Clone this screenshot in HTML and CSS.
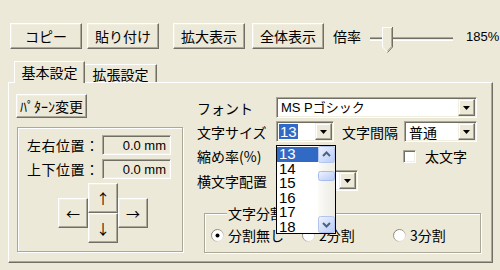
FILE: index.html
```html
<!DOCTYPE html>
<html lang="ja">
<head>
<meta charset="utf-8">
<link rel="stylesheet" href="styles.css">
</head>
<body>
<div class="toolbar">
  <button class="btn tb">コピー</button>
  <button class="btn tb g5">貼り付け</button>
  <button class="btn tb g14">拡大表示</button>
  <button class="btn tb g7">全体表示</button>
  <span class="rate">倍率</span>
  <svg class="slider" width="96" height="30" viewBox="0 0 96 30">
    <rect x="8" y="11" width="83" height="1" fill="#aca899"/>
    <rect x="8" y="12" width="83" height="1" fill="#716f64"/>
    <rect x="8" y="13" width="83" height="1" fill="#f1efe2"/>
    <rect x="8" y="14" width="83" height="1" fill="#ffffff"/>
    <path d="M20,1H31V21L25.5,27L20,21Z" fill="#ece9d8"/>
    <path d="M20.5,21V1.5H30.5" fill="none" stroke="#ffffff"/>
    <path d="M20.5,21L25.5,26.3" fill="none" stroke="#ffffff"/>
    <path d="M30.5,1V21L25.5,26.5" fill="none" stroke="#716f64"/>
    <path d="M29.5,2V20.6L25.6,24.8" fill="none" stroke="#aca899"/>
  </svg>
  <span class="pct">185%</span>
</div>

<div class="tabs">
  <div class="tab active">基本設定</div>
  <div class="tab">拡張設定</div>
</div>

<div class="panel">
  <div class="leftcol">
    <button class="btn pattern">ﾊﾟﾀｰﾝ変更</button>
    <div class="group pos">
      <div class="prow"><span class="plbl">左右位置：</span><span class="edit">0.0 mm</span></div>
      <div class="prow"><span class="plbl">上下位置：</span><span class="edit">0.0 mm</span></div>
      <div class="arrows">
        <button class="btn arr up">↑</button>
        <button class="btn arr lt">←</button>
        <button class="btn arr rt">→</button>
        <button class="btn arr dn">↓</button>
      </div>
    </div>
  </div>

  <div class="rightcol">
    <div class="r">
      <span class="lbl">フォント</span>
      <div class="combo w201"><span class="val font">MS Pゴシック</span><span class="dd"><svg width="7" height="4" viewBox="0 0 7 4"><path d="M0 0H7L3.5 4Z" fill="#000"/></svg></span></div>
    </div>
    <div class="r">
      <span class="lbl">文字サイズ</span>
      <div class="combo w58"><span class="val num"><span class="sel">13</span></span><span class="dd"><svg width="7" height="4" viewBox="0 0 7 4"><path d="M0 0H7L3.5 4Z" fill="#000"/></svg></span></div>
      <span class="lbl2">文字間隔</span>
      <div class="combo w73"><span class="val">普通</span><span class="dd"><svg width="7" height="4" viewBox="0 0 7 4"><path d="M0 0H7L3.5 4Z" fill="#000"/></svg></span></div>
    </div>
    <div class="r r3">
      <span class="lbl wide">縮め率(%)</span>
      <span class="chk"></span>
      <span class="chklbl">太文字</span>
    </div>
    <div class="r">
      <span class="lbl">横文字配置</span>
      <div class="combo w82"><span class="val"></span><span class="dd"><svg width="7" height="4" viewBox="0 0 7 4"><path d="M0 0H7L3.5 4Z" fill="#000"/></svg></span></div>
    </div>
    <div class="group split">
      <span class="gtitle">文字分割</span>
      <div class="opts">
        <label class="opt o1">
          <svg width="13" height="13" viewBox="0 0 13 13"><defs><linearGradient id="rg1" x1="0" y1="0" x2="1" y2="1"><stop offset="0" stop-color="#716f64"/><stop offset="0.5" stop-color="#aca899"/><stop offset="1" stop-color="#ffffff"/></linearGradient></defs><circle cx="6.5" cy="6.5" r="6" fill="#ffffff" stroke="url(#rg1)"/><circle cx="6.5" cy="6.5" r="2" fill="#000"/></svg>
          <span class="otxt">分割無し</span>
        </label>
        <label class="opt o2">
          <svg width="13" height="13" viewBox="0 0 13 13"><defs><linearGradient id="rg2" x1="0" y1="0" x2="1" y2="1"><stop offset="0" stop-color="#716f64"/><stop offset="0.5" stop-color="#aca899"/><stop offset="1" stop-color="#ffffff"/></linearGradient></defs><circle cx="6.5" cy="6.5" r="6" fill="#ffffff" stroke="url(#rg2)"/></svg>
          <span class="otxt">2分割</span>
        </label>
        <label class="opt o3">
          <svg width="13" height="13" viewBox="0 0 13 13"><defs><linearGradient id="rg3" x1="0" y1="0" x2="1" y2="1"><stop offset="0" stop-color="#716f64"/><stop offset="0.5" stop-color="#aca899"/><stop offset="1" stop-color="#ffffff"/></linearGradient></defs><circle cx="6.5" cy="6.5" r="6" fill="#ffffff" stroke="url(#rg3)"/></svg>
          <span class="otxt">3分割</span>
        </label>
      </div>
    </div>
  </div>
</div>

<div class="droplist">
  <ul class="items">
    <li class="hl">13</li>
    <li>14</li>
    <li>15</li>
    <li>16</li>
    <li>17</li>
    <li>18</li>
  </ul>
  <div class="sbar">
    <svg class="sbtn" width="17" height="17" viewBox="0 0 17 17"><defs><linearGradient id="sg1" x1="0" y1="0" x2="1" y2="1"><stop offset="0" stop-color="#eef3fe"/><stop offset="1" stop-color="#b7cbf7"/></linearGradient></defs><rect x="0.5" y="0.5" width="16" height="16" rx="2" fill="url(#sg1)" stroke="#b3c5ee"/><path d="M5 10L8.5 6.5L12 10" fill="none" stroke="#4d6185" stroke-width="2"/></svg>
    <svg class="sthumb" width="17" height="10" viewBox="0 0 17 10"><defs><linearGradient id="sg2" x1="0" y1="0" x2="1" y2="1"><stop offset="0" stop-color="#eef3fe"/><stop offset="1" stop-color="#b7cbf7"/></linearGradient></defs><rect x="0.5" y="0.5" width="16" height="9" rx="2" fill="url(#sg2)" stroke="#a8bdee"/></svg>
    <span class="sspace"></span>
    <svg class="sbtn" width="17" height="17" viewBox="0 0 17 17"><defs><linearGradient id="sg3" x1="0" y1="0" x2="1" y2="1"><stop offset="0" stop-color="#eef3fe"/><stop offset="1" stop-color="#b7cbf7"/></linearGradient></defs><rect x="0.5" y="0.5" width="16" height="16" rx="2" fill="url(#sg3)" stroke="#b3c5ee"/><path d="M5 7L8.5 10.5L12 7" fill="none" stroke="#4d6185" stroke-width="2"/></svg>
  </div>
</div>
</body>
</html>
```

FILE: styles.css
```css
* { box-sizing: border-box; }
html, body { margin: 0; padding: 0; }
body {
  width: 500px;
  height: 270px;
  overflow: hidden;
  position: relative;
  background: #ece9d8;
  color: #000;
  font-family: "Noto Sans CJK JP", sans-serif;
  font-size: 14px;
}

.btn {
  background: #ece9d8;
  border: 1px solid;
  border-color: #ffffff #716f64 #716f64 #ffffff;
  box-shadow: inset -1px -1px 0 #aca899, inset 1px 1px 0 #f1efe2;
  font-family: "Noto Sans CJK JP", sans-serif;
  font-size: 14px;
  line-height: 1;
  color: #000;
  padding: 0;
  margin: 0;
  display: flex;
  align-items: center;
  justify-content: center;
}

/* toolbar */
.toolbar {
  display: flex;
  align-items: center;
  height: 49px;
  padding: 23px 0 0 10px;
}
.tb { width: 72px; height: 26px; flex: none; }
.g5 { margin-left: 5px; }
.g14 { margin-left: 14px; }
.g7 { margin-left: 7px; }
.rate { margin-left: 9px; line-height: 1; }
.slider { flex: none; align-self: flex-start; margin-top: 3px; margin-left: 1px; }
.pct {
  margin-left: 8px;
  font-family: "Liberation Sans", sans-serif;
  font-size: 13px;
  line-height: 1;
}

/* tabs */
.tabs {
  display: flex;
  align-items: flex-end;
  height: 21px;
  margin-top: 12px;
  padding-left: 14px;
  position: relative;
  z-index: 2;
}
.tab {
  height: 18px;
  width: 72px;
  background: #ece9d8;
  border-top: 1px solid #ffffff;
  border-right: 1px solid #716f64;
  box-shadow: inset -1px 0 0 #aca899;
  display: flex;
  align-items: center;
  justify-content: center;
  line-height: 1;
}
.tab.active {
  width: 71px;
  height: 22px;
  margin-bottom: -1px;
  border-left: 1px solid #ffffff;
  padding-bottom: 2px;
}

/* panel */
.panel {
  margin-left: 8px;
  width: 485px;
  height: 181px;
  border: 1px solid;
  border-color: #ffffff #716f64 #716f64 #ffffff;
  box-shadow: inset -1px -1px 0 #aca899;
  display: flex;
  position: relative;
  z-index: 1;
}
.leftcol {
  flex: none;
  width: 174px;
  padding: 11px 0 0 7px;
}
.pattern { width: 71px; height: 24px; font-size: 14px; }

.group {
  border: 1px solid #aca899;
  box-shadow: inset 1px 1px 0 #ffffff, 1px 1px 0 #ffffff;
}
.pos {
  margin: 9px 0 0 1px;
  width: 166px;
  height: 125px;
  padding: 7px 0 0 9px;
}
.prow {
  display: flex;
  align-items: center;
  height: 20px;
  margin-bottom: 4px;
}
.plbl { width: 75px; flex: none; letter-spacing: 0.5px; line-height: 1; }
.edit {
  width: 69px;
  height: 20px;
  border: 1px solid;
  border-color: #aca899 #ffffff #ffffff #aca899;
  box-shadow: inset 1px 1px 0 #716f64, inset -1px -1px 0 #f1efe2;
  font-family: "Liberation Sans", sans-serif;
  font-size: 13px;
  display: flex;
  align-items: center;
  justify-content: flex-end;
  padding-right: 4px;
}
.arrows {
  display: grid;
  grid-template-columns: repeat(3, 30px);
  grid-template-rows: repeat(4, 15px);
  margin: 2px 0 0 31px;
}
.arr { width: 30px; height: 30px; font-size: 14px; }
.up { grid-column: 2; grid-row: 1 / 3; }
.lt { grid-column: 1; grid-row: 2 / 4; }
.rt { grid-column: 3; grid-row: 2 / 4; }
.dn { grid-column: 2; grid-row: 3 / 5; }

.rightcol {
  flex: none;
  width: 290px;
  margin-left: 14px;
  padding-top: 14px;
}
.r {
  display: flex;
  align-items: center;
  height: 21px;
  margin-bottom: 3px;
}
.r3 { height: 22px; }
.lbl { width: 79px; flex: none; line-height: 1; }
.lbl.wide { width: 206px; }
.lbl2 { margin-left: 8px; width: 62px; flex: none; line-height: 1; }
.combo {
  height: 21px;
  flex: none;
  display: flex;
  align-items: stretch;
  background: #ffffff;
  border: 1px solid;
  border-color: #aca899 #ffffff #ffffff #aca899;
  box-shadow: inset 1px 1px 0 #716f64, inset -1px -1px 0 #f1efe2;
  padding: 1px;
}
.w201 { width: 201px; }
.w58 { width: 58px; }
.w73 { width: 73px; }
.w82 { width: 82px; }
.val {
  flex: 1;
  display: flex;
  align-items: center;
  padding-left: 3px;
  line-height: 1;
  white-space: nowrap;
  overflow: hidden;
}
.val.font { font-size: 13px; font-family: "Liberation Sans", "Noto Sans CJK JP", sans-serif; padding-left: 3px; }
.val.num { padding-left: 1px; }
.sel {
  background: #316ac5;
  color: #ffffff;
  font-family: "Liberation Sans", sans-serif;
  font-size: 15px;
  line-height: 15px;
  padding: 0 1px;
}
.dd {
  width: 17px;
  flex: none;
  background: #ece9d8;
  border: 1px solid;
  border-color: #f1efe2 #716f64 #716f64 #f1efe2;
  box-shadow: inset -1px -1px 0 #aca899, inset 1px 1px 0 #ffffff;
  display: flex;
  align-items: center;
  justify-content: center;
}
.chk {
  width: 13px;
  height: 13px;
  flex: none;
  background: #ffffff;
  border: 1px solid;
  border-color: #aca899 #ffffff #ffffff #aca899;
  box-shadow: inset 1px 1px 0 #716f64, inset -1px -1px 0 #f1efe2;
}
.chklbl { margin-left: 9px; line-height: 1; }

.split {
  margin: 22px 0 0 7px;
  width: 277px;
  height: 40px;
  position: relative;
}
.gtitle {
  position: absolute;
  top: -9px;
  left: 22px;
  line-height: 16px;
  padding: 0 1px;
  background: #ece9d8;
}
.opts {
  display: flex;
  align-items: center;
  height: 16px;
  margin-top: 13px;
  padding-left: 6px;
}
.opt { display: flex; align-items: center; flex: none; }
.opt svg { flex: none; }
.o1, .o2 { width: 91px; }
.otxt { margin-left: 4px; line-height: 1; }

/* dropdown list overlay */
.droplist {
  position: absolute;
  left: 276px;
  top: 145px;
  width: 60px;
  height: 89px;
  background: #ffffff;
  border: 1px solid #000;
  z-index: 10;
  display: flex;
}
.items {
  list-style: none;
  margin: 0;
  padding: 1px 0 0 0;
  width: 41px;
  flex: none;
}
.items li {
  height: 14.5px;
  line-height: 14.5px;
  font-family: "Liberation Sans", sans-serif;
  font-size: 15px;
  padding-left: 2px;
}
.items li.hl { background: #316ac5; color: #ffffff; }
.sbar {
  width: 17px;
  flex: none;
  display: flex;
  flex-direction: column;
  background: linear-gradient(90deg, #fbfbf8, #ecebe3);
}
.sbtn { flex: none; display: block; }
.sthumb { flex: none; display: block; margin-top: 8px; }
.sspace { flex: 1; }
```
